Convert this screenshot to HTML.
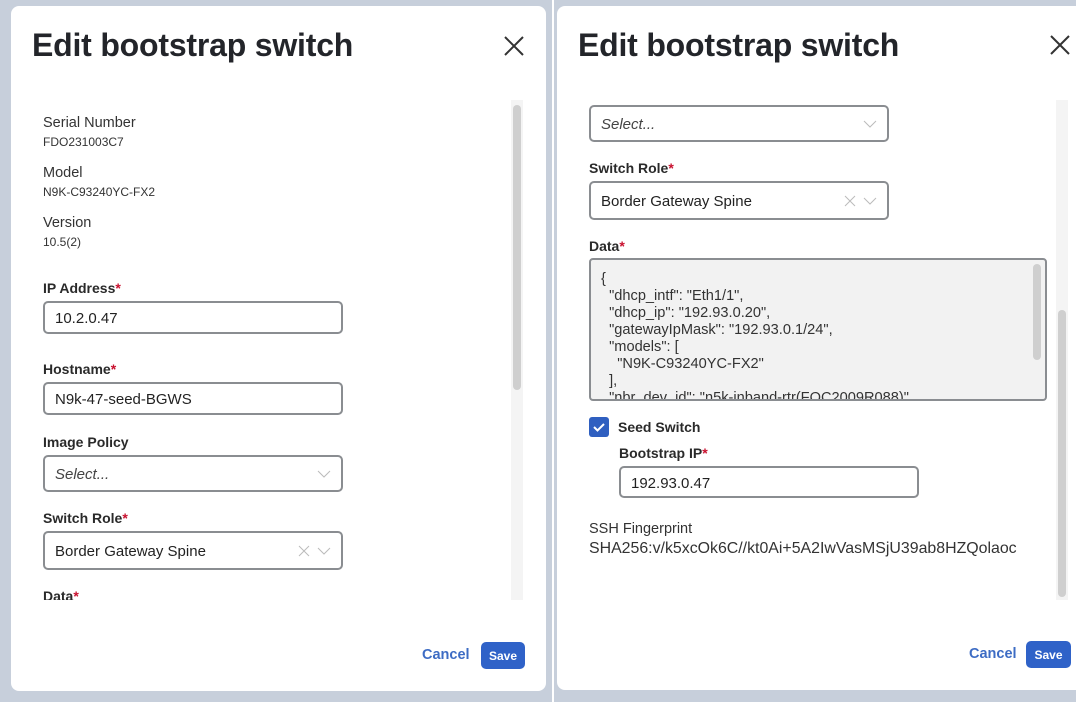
<!DOCTYPE html>
<html><head><style>
*{box-sizing:border-box;margin:0;padding:0}
body{width:1076px;height:702px;overflow:hidden;background:#c7cfdb;font-family:"Liberation Sans",sans-serif;color:#222;position:relative}
.m{position:absolute;background:#fff;border-radius:8px}
.a{position:absolute;white-space:nowrap}
.t{font-size:32px;font-weight:bold;color:#23252a;letter-spacing:-0.2px}
.lb{font-size:14px;font-weight:bold;color:#2a2a2a}
.st{color:#c8102e}
.k{font-size:14.5px;color:#333}
.v{font-size:12px;color:#333}
.in{position:absolute;border:2px solid #8a8d91;border-radius:5px;background:#fff;font-size:15px;color:#222;padding-left:10px;padding-top:2px;display:flex;align-items:center}
.ph{font-style:italic;color:#444}
.cv{position:absolute;right:10px;top:50%;margin-top:-7px}
.cx{position:absolute;right:30px;top:50%;margin-top:-7px}
.sb{position:absolute;background:#f4f4f4;width:12px}
.th{position:absolute;background:#cfcfcf;border-radius:5px;width:8px;left:2px}
.cancel{font-size:14.5px;font-weight:bold;color:#3d6cc4}
.save{position:absolute;background:#2f62c8;color:#fff;font-size:12px;font-weight:bold;border-radius:5px;display:flex;align-items:center;justify-content:center}
.ta{position:absolute;border:2px solid #8a8d91;border-radius:4px;background:#f2f2f2;overflow:hidden;font-size:14.6px;line-height:17px;color:#333;padding:11px 0 0 10px;white-space:pre}
</style></head><body>
<div style="position:absolute;left:552px;top:0;width:2px;height:702px;background:#fff"></div>
<div class="m" style="left:11px;top:6px;width:535px;height:685px"></div>
<div class="a t" style="left:32px;top:27px">Edit bootstrap switch</div>
<svg class="a" style="left:503px;top:35px" width="22" height="22"><path d="M2 2L20 20M20 2L2 20" stroke="#333" stroke-width="2"/></svg>
<div class="sb" style="left:511px;top:100px;height:500px"><div class="th" style="top:5px;height:285px"></div></div>
<div class="a k" style="left:43px;top:115px">Serial Number</div>
<div class="a v" style="left:43px;top:135px">FDO231003C7</div>
<div class="a k" style="left:43px;top:165px">Model</div>
<div class="a v" style="left:43px;top:185px">N9K-C93240YC-FX2</div>
<div class="a k" style="left:43px;top:215px">Version</div>
<div class="a v" style="left:43px;top:235px">10.5(2)</div>
<div class="a lb" style="left:43px;top:280px">IP Address<span class="st">*</span></div>
<div class="in" style="left:43px;top:301px;width:300px;height:33px">10.2.0.47</div>
<div class="a lb" style="left:43px;top:361px">Hostname<span class="st">*</span></div>
<div class="in" style="left:43px;top:382px;width:300px;height:33px">N9k-47-seed-BGWS</div>
<div class="a lb" style="left:43px;top:434px">Image Policy</div>
<div class="in" style="left:43px;top:455px;width:300px;height:37px"><span class="ph">Select...</span><svg class="cv" width="14" height="14"><path d="M1 4L7 10L13 4" stroke="#bbb" fill="none"/></svg></div>
<div class="a lb" style="left:43px;top:510px">Switch Role<span class="st">*</span></div>
<div class="in" style="left:43px;top:531px;width:300px;height:39px">Border Gateway Spine<svg class="cx" width="14" height="14"><path d="M2 2L12 12M12 2L2 12" stroke="#bbb"/></svg><svg class="cv" width="14" height="14"><path d="M1 4L7 10L13 4" stroke="#bbb" fill="none"/></svg></div>
<div style="position:absolute;left:43px;top:588px;height:12px;overflow:hidden"><div class="lb" style="white-space:nowrap">Data<span class="st">*</span></div></div>
<div class="a cancel" style="left:422px;top:647px">Cancel</div>
<div class="save" style="left:481px;top:642px;width:44px;height:27px">Save</div>
<div class="m" style="left:557px;top:6px;width:530px;height:684px"></div>
<div class="a t" style="left:578px;top:27px">Edit bootstrap switch</div>
<svg class="a" style="left:1049px;top:34px" width="22" height="22"><path d="M2 2L20 20M20 2L2 20" stroke="#333" stroke-width="2"/></svg>
<div class="sb" style="left:1056px;top:100px;height:500px"><div class="th" style="top:210px;height:287px"></div></div>
<div class="in" style="left:589px;top:105px;width:300px;height:37px"><span class="ph">Select...</span><svg class="cv" width="14" height="14"><path d="M1 4L7 10L13 4" stroke="#bbb" fill="none"/></svg></div>
<div class="a lb" style="left:589px;top:160px">Switch Role<span class="st">*</span></div>
<div class="in" style="left:589px;top:181px;width:300px;height:39px">Border Gateway Spine<svg class="cx" width="14" height="14"><path d="M2 2L12 12M12 2L2 12" stroke="#bbb"/></svg><svg class="cv" width="14" height="14"><path d="M1 4L7 10L13 4" stroke="#bbb" fill="none"/></svg></div>
<div class="a lb" style="left:589px;top:238px">Data<span class="st">*</span></div>
<div class="ta" style="left:589px;top:258px;width:458px;height:143px">{
  "dhcp_intf": "Eth1/1",
  "dhcp_ip": "192.93.0.20",
  "gatewayIpMask": "192.93.0.1/24",
  "models": [
    "N9K-C93240YC-FX2"
  ],
  "nbr_dev_id": "n5k-inband-rtr(FOC2009R088)"<div style="position:absolute;right:4px;top:4px;width:8px;height:96px;background:#cfcfcf;border-radius:4px"></div></div>
<div class="a" style="left:589px;top:417px;width:20px;height:20px;background:#2f5fc0;border-radius:3px"><svg width="20" height="20"><path d="M5 10L8.5 13.5L15 7" stroke="#fff" stroke-width="2" fill="none"/></svg></div>
<div class="a lb" style="left:618px;top:419px">Seed Switch</div>
<div class="a lb" style="left:619px;top:445px">Bootstrap IP<span class="st">*</span></div>
<div class="in" style="left:619px;top:466px;width:300px;height:32px">192.93.0.47</div>
<div class="a k" style="left:589px;top:521px">SSH Fingerprint</div>
<div class="a" style="left:589px;top:540px;font-size:15.9px;color:#333">SHA256:v/k5xcOk6C//kt0Ai+5A2IwVasMSjU39ab8HZQolaoc</div>
<div class="a cancel" style="left:969px;top:646px">Cancel</div>
<div class="save" style="left:1026px;top:641px;width:45px;height:27px">Save</div>
</body></html>
